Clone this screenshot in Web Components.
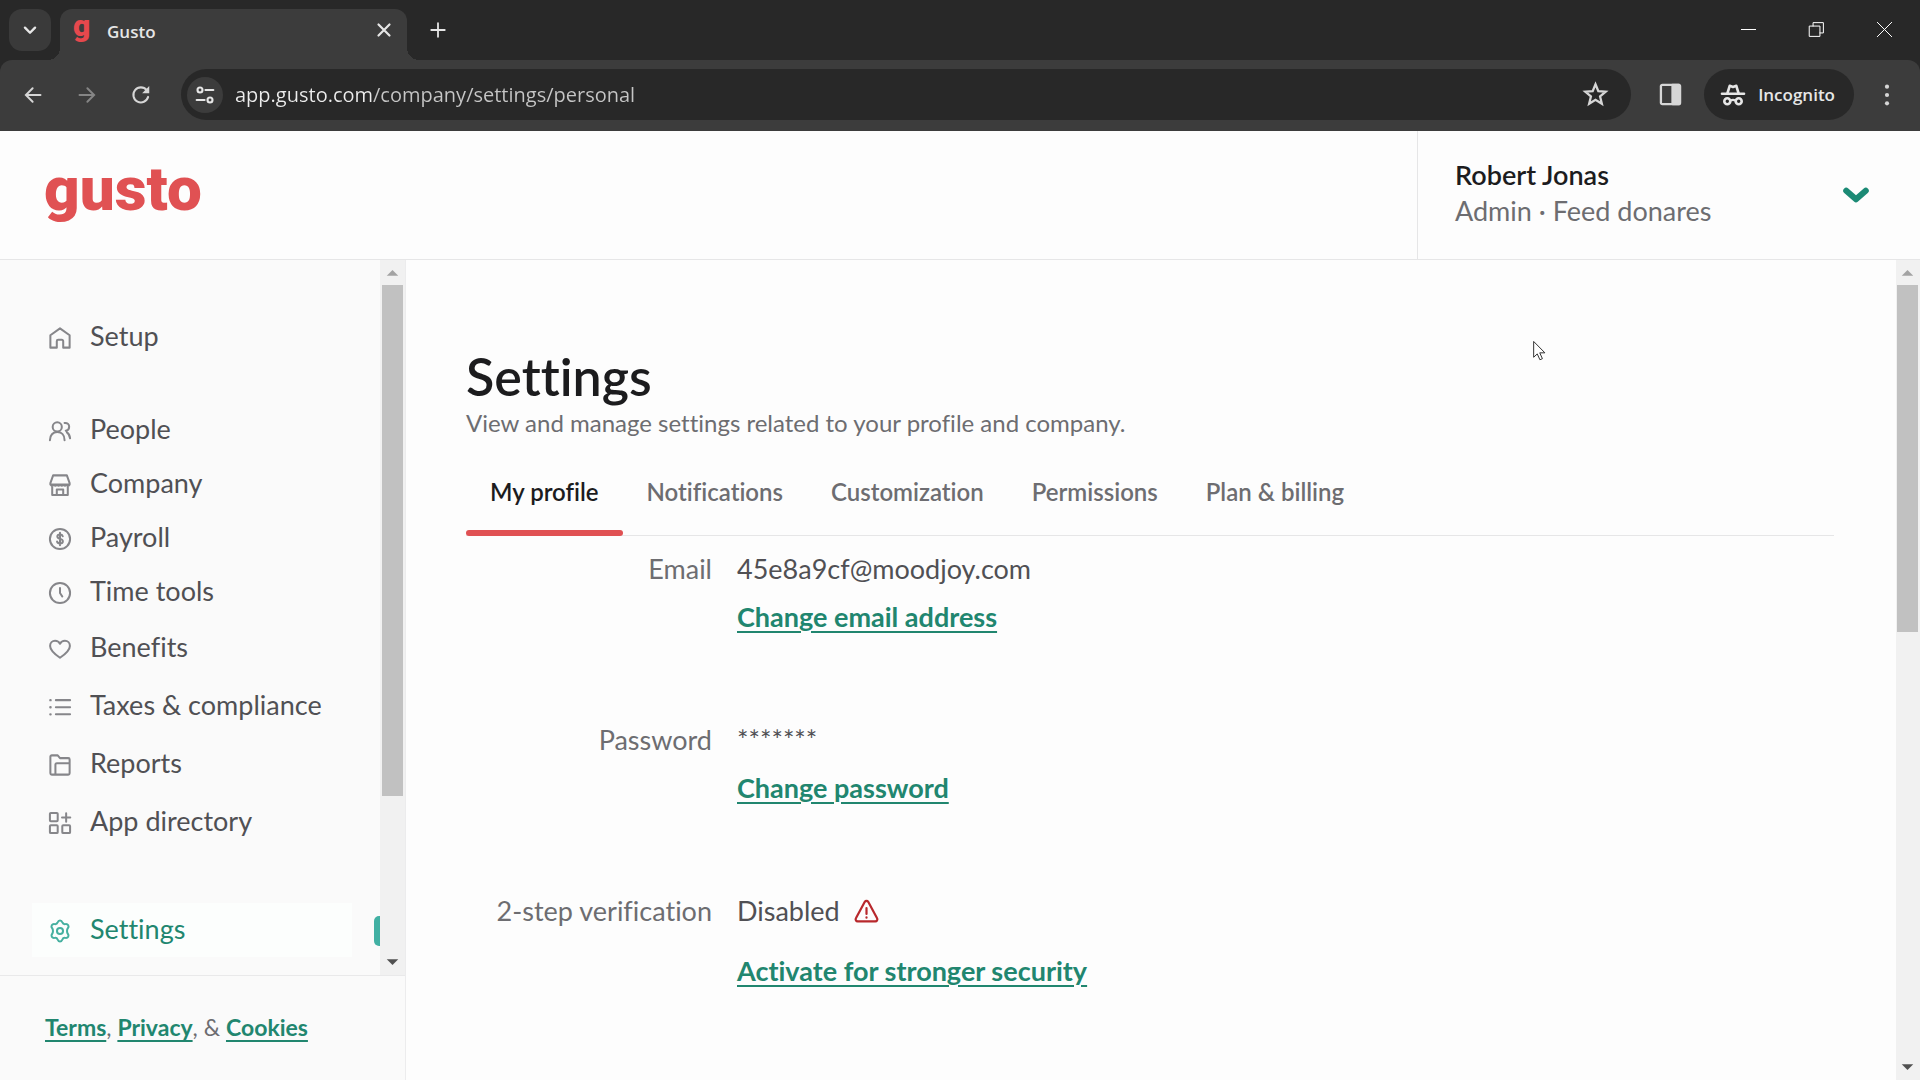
<!DOCTYPE html>
<html lang="en">
<head>
<meta charset="utf-8">
<title>Gusto</title>
<style>
  html, body { height: 100%; margin: 0; }
  body { font-family: Lato, "Liberation Sans", sans-serif; font-size: 27px; font-variant-ligatures: none; color: #505054; background: #fdfdfd; overflow: hidden; }
</style>
</head>
<body>
<app-window></app-window>
<script>
const ICONS = {
  chevron: '<path d="M6.500 9.500l5.500 5.500 5.500-5.500" stroke-width="2.600"/>',
  close: '<path d="M6 6l12 12M18 6L6 18" stroke-width="2.400"/>',
  plus: '<path d="M12 3v18M3 12h18" stroke-width="2.400"/>',
  back: '<path d="M22 12H3M11.500 3L2.500 12l9 9" stroke-width="2.600" stroke-linejoin="miter"/>',
  forward: '<path d="M2 12h19M12.500 3l9 9-9 9" stroke-width="2.600" stroke-linejoin="miter"/>',
  reload: '<path d="M21.500 14.500A10 10 0 1 1 19.600 5.500L21 7.500" stroke-width="2.700"/><path d="M23 0v9.500h-9.500z" fill="currentColor" stroke="none"/>',
  tune: '<circle cx="6" cy="6" r="3" stroke-width="2.500"/><path d="M12.500 6H22M2 18h9.500" stroke-width="2.500"/><circle cx="18" cy="18" r="3" stroke-width="2.500"/>',
  star: '<path d="M12 2.200l2.700 6.600 7.100.5-5.400 4.600 1.700 7L12 17.100l-6.100 3.800 1.700-7-5.400-4.600 7.100-.5z" stroke-width="2.200" stroke-linejoin="miter"/>',
  panel: '<rect x="2" y="2" width="20" height="20" rx="1.500" stroke-width="2.400"/><path d="M14 2h7v20h-7z" fill="currentColor"/>',
  incognito: '<path d="M1 10.800h22" stroke-width="2.600"/><path d="M6.500 10L8.700 2.800l3.300 1.200 3.300-1.200L17.500 10" stroke-width="2.600"/><circle cx="6.300" cy="18.200" r="3" stroke-width="2.600"/><circle cx="17.700" cy="18.200" r="3" stroke-width="2.600"/><path d="M9.500 17.600q2.500-1.500 5 0"/>',
  dots: '<g fill="currentColor" stroke="none"><circle cx="12" cy="2" r="2.500"/><circle cx="12" cy="12" r="2.500"/><circle cx="12" cy="22" r="2.500"/></g>',
  minimize: '<path d="M0 12h24" stroke-width="1.600" stroke-linecap="butt"/>',
  restore: '<path d="M1 6.500h16.500V23H1zM6.500 6.500V1H23v16.500h-5.500" stroke-width="1.600" stroke-linejoin="miter"/>',
  quit: '<path d="M.5.500l23 23M23.500.500l-23 23" stroke-width="1.600"/>',
  caret: '<path d="M3 8l9 8 9-8" stroke-width="5.600"/>',
  home: '<path d="M1.500 9L12 1.500 22.500 9V22.500h-7v-7A1.500 1.500 0 0 0 14 14h-4a1.500 1.500 0 0 0-1.500 1.500v7h-7z"/>',
  people: '<circle cx="9" cy="7.500" r="5"/><path d="M1 22c0-5.600 3.300-8.800 8-8.800s8 3.200 8 8.800M17 3.200c3.300-.4 5 1.700 5 4.200 0 2.200-1.600 4-3.700 4.300M19.500 13.500c2 1.400 3.300 3.600 3.500 6.500"/>',
  store: '<path d="M4.500 1.500h15L22.500 10v1.500h-21V10zM3.500 12v11h17V12M8.500 23v-6h7v6M1.500 11.500q1.700 2.400 3.500 0 1.700 2.400 3.500 0 1.700 2.400 3.500 0 1.700 2.400 3.500 0 1.700 2.400 3.500 0 1.700 2.400 3.500 0"/>',
  payroll: '<circle cx="12" cy="12" r="11"/><path d="M15 9c-.4-1.300-1.500-1.900-3-1.900-1.700 0-2.900.8-2.900 2.300 0 3.300 6 1.600 6 5 0 1.600-1.300 2.500-3.100 2.500-1.700 0-2.900-.7-3.200-2.100M12 5.300v13.400"/>',
  clock: '<circle cx="12" cy="12" r="11"/><path d="M12 6.500V12l2.500 3.800"/>',
  heart: '<path d="M12 21.500C5.500 17 1.200 13 1.200 8.600 1.200 5.200 3.700 3 6.600 3 8.900 3 11 4.300 12 6.300 13 4.300 15.100 3 17.400 3c2.900 0 5.400 2.200 5.400 5.600 0 4.400-4.300 8.400-10.800 12.900z"/>',
  list: '<path d="M7.500 4.500H23M7.500 12.300H23M7.500 20H23"/><path d="M1.500 4.500h.2M1.500 12.300h.2M1.500 20h.2" stroke-width="2.600"/>',
  folder: '<path d="M1.500 3a1.500 1.500 0 0 1 1.500-1.500h6.500l2.500 3h9A1.500 1.500 0 0 1 22.500 6v15a1.500 1.500 0 0 1-1.500 1.500H3A1.500 1.500 0 0 1 1.500 21zM7 22.500V11.500A1.500 1.500 0 0 1 8.500 10h14"/>',
  apps: '<rect x="1" y="1" width="8.500" height="9" rx="1"/><rect x="1" y="14.500" width="8.500" height="8.500" rx="1"/><rect x="14.500" y="14.500" width="8.500" height="8.500" rx="1"/><path d="M18.700 1.500v9M14.200 6h9"/>',
  gear: '<path d="M9.400 2.700c1-2.900 4.200-2.900 5.200 0 .5 1.300 1.700 2 3.100 1.800 3.100-.5 4.700 2.100 2.800 4.500-1.100 1.300-1.100 4.700 0 6 1.900 2.400.3 5-2.800 4.500-1.400-.2-2.600.5-3.100 1.800-1 2.900-4.200 2.900-5.200 0-.5-1.300-1.700-2-3.100-1.800-3.100.5-4.700-2.100-2.800-4.500 1.100-1.300 1.100-4.700 0-6-1.900-2.400-.3-5 2.800-4.500 1.400.2 2.600-.5 3.100-1.800z"/><circle cx="12" cy="12" r="3.300"/>',
  warning: '<path d="M10.300 2.800L1.400 19.300A2 2 0 0 0 3.200 22.300h17.600a2 2 0 0 0 1.800-3L13.700 2.800a2 2 0 0 0-3.400 0zM12 9v6M12 18.300v.4"/>',
  pointer: '<path d="M2 1v18.500l4.300-4 3.200 7 3-1.300-3.200-7H15z" fill="#fff" stroke="#333" stroke-width="1.200"/>'
};

function define(name, html, setup) {
  const template = document.createElement('template');
  template.innerHTML = html;
  customElements.define(name, class extends HTMLElement {
    constructor() {
      super();
      this.attachShadow({ mode: 'open' }).append(template.content.cloneNode(true));
    }
    connectedCallback() { if (setup) setup(this, this.shadowRoot); }
  });
}

define('ui-icon', `
  <style>
    :host { display: block; flex: none; width: 22px; height: 22px; }
    svg { display: block; width: 100%; height: 100%; overflow: visible; fill: none; stroke: currentColor; stroke-width: 2.200; stroke-linecap: round; stroke-linejoin: round; }
  </style>
  <svg viewBox="0 0 24 24" aria-hidden="true"></svg>`,
  (host, root) => { root.querySelector('svg').innerHTML = ICONS[host.getAttribute('name')] || ''; });

define('scroll-bar', `
  <style>
    :host { display: flex; flex-direction: column; flex: none; width: 24px; box-sizing: border-box; padding: 0 2px 0 1px; background: #f1f1f1; }
    svg { display: block; flex: none; height: 25px; width: 100%; }
    .thumb { flex: var(--thumb) 0 0; background: #c1c1c1; }
    .rest { flex: var(--rest) 0 0; }
  </style>
  <svg viewBox="0 0 22 25"><path d="M5 16l6-6 6 6z" fill="#a3a3a3"/></svg>
  <div class="thumb"></div><div class="rest"></div>
  <svg viewBox="0 0 22 25"><path d="M5 9h12l-6 6z" fill="#505050"/></svg>`);

define('browser-tab', `
  <style>
    :host { display: flex; align-items: center; position: relative; box-sizing: border-box; width: 347px; height: 51px; padding: 0 12px 9px 13px; border-radius: 12px 12px 0 0; background: #3c3c3c; color: #e6e6e6; }
    :host::before, :host::after { content: ""; position: absolute; bottom: 0; width: 12px; height: 12px; }
    :host::before { left: -12px; background: radial-gradient(circle at 0 0, transparent 12px, #3c3c3c 12px); }
    :host::after { right: -12px; background: radial-gradient(circle at 100% 0, transparent 12px, #3c3c3c 12px); }
    .mark { width: 34px; font: 900 30px/34px Roboto, sans-serif; color: #e5484d; padding-bottom: 8px; }
    .title { flex: 1; padding-top: 4px; font: 600 17px/24px "Open Sans", sans-serif; }
    button { border: 0; padding: 0; background: none; color: inherit; }
    ui-icon { width: 22px; height: 22px; }
  </style>
  <span class="mark">g</span>
  <span class="title"><slot></slot></span>
  <button aria-label="Close tab"><ui-icon name="close"></ui-icon></button>`);

define('tab-strip', `
  <style>
    :host { display: flex; align-items: flex-end; height: 60px; background: #282828; color: #e6e6e6; }
    button { display: grid; place-items: center; border: 0; padding: 0; background: none; color: inherit; }
    .search { width: 42px; height: 42px; margin: 0 9px 9px 9px; border-radius: 13px; background: #3a3a3a; }
    .add { width: 34px; height: 42px; margin: 0 0 9px 14px; }
    .add ui-icon { width: 18px; height: 18px; }
    .window { display: flex; margin: 0 2px 0 auto; height: 60px; }
    .window button { width: 68px; height: 58px; color: #fff; }
    .window ui-icon { width: 15px; height: 15px; }
  </style>
  <button class="search" aria-label="Search tabs"><ui-icon name="chevron"></ui-icon></button>
  <browser-tab>Gusto</browser-tab>
  <button class="add" aria-label="New tab"><ui-icon name="plus"></ui-icon></button>
  <div class="window">
    <button aria-label="Minimize"><ui-icon name="minimize"></ui-icon></button>
    <button aria-label="Restore"><ui-icon name="restore"></ui-icon></button>
    <button aria-label="Close"><ui-icon name="quit"></ui-icon></button>
  </div>`);

define('tool-bar', `
  <style>
    :host { display: block; height: 71px; background: #282828; }
    .bar { display: flex; align-items: center; height: 100%; box-sizing: border-box; padding: 0 15px 2px 6px; border-radius: 12px 12px 0 0; background: #3c3c3c; color: #d6d6d6; }
    button { display: grid; place-items: center; border: 0; padding: 0; background: none; color: inherit; font: inherit; }
    .nav { width: 54px; height: 51px; }
    .nav ui-icon { width: 18px; height: 18px; }
    .nav[disabled] { color: #858585; }
    .omnibox { display: flex; align-items: center; flex: 1; height: 51px; margin-left: 13px; border-radius: 26px; background: #282828; }
    .site { width: 36px; height: 36px; margin-left: 6px; border-radius: 50%; background: #3c3c3c; color: #e6e6e6; }
    .site ui-icon { width: 20px; height: 20px; }
    input { flex: 1; min-width: 0; margin: 0 0 0 12px; padding: 0; border: 0; outline: 0; font: 20px/30px "Open Sans", sans-serif; color: transparent; background: linear-gradient(90deg, #ececec 138px, #c6c6c6 0); background-clip: text; -webkit-background-clip: text; }
    .star { width: 48px; height: 48px; margin-right: 12px; }
    .star ui-icon { width: 25px; height: 25px; }
    .side { width: 48px; height: 48px; margin: 0 10px 0 15px; }
    .side ui-icon { width: 23px; height: 23px; }
    .incognito { display: flex; align-items: center; gap: 13px; height: 51px; padding: 0 19px 0 17px; border-radius: 26px; background: #282828; color: #e6e6e6; font: 600 17px/24px "Open Sans", sans-serif; }
    .incognito ui-icon { width: 24px; height: 24px; }
    .more { width: 36px; height: 48px; margin-left: 15px; }
    .more ui-icon { width: 20px; height: 20px; }
  </style>
  <div class="bar">
    <button class="nav" aria-label="Back"><ui-icon name="back"></ui-icon></button>
    <button class="nav" aria-label="Forward" disabled><ui-icon name="forward"></ui-icon></button>
    <button class="nav" aria-label="Reload"><ui-icon name="reload"></ui-icon></button>
    <div class="omnibox">
      <button class="site" aria-label="Site information"><ui-icon name="tune"></ui-icon></button>
      <input type="text" aria-label="Address" value="app.gusto.com/company/settings/personal">
      <button class="star" aria-label="Bookmark"><ui-icon name="star"></ui-icon></button>
    </div>
    <button class="side" aria-label="Side panel"><ui-icon name="panel"></ui-icon></button>
    <button class="incognito"><ui-icon name="incognito"></ui-icon>Incognito</button>
    <button class="more" aria-label="Menu"><ui-icon name="dots"></ui-icon></button>
  </div>`);

define('site-header', `
  <style>
    :host { display: flex; justify-content: space-between; height: 128px; border-bottom: 1px solid #e6e6e7; background: #fdfdfd; }
    .logo { align-self: center; margin-left: 44px; padding-bottom: 12px; font: 900 62px/72px Roboto, sans-serif; color: #e05153; text-decoration: none; }
    .account { display: flex; align-items: center; justify-content: space-between; width: 503px; box-sizing: border-box; padding: 0 51px 4px 37px; border: 0; border-left: 1px solid #e6e6e7; background: none; font: inherit; line-height: 36px; text-align: left; color: #6d6d71; }
    .name { display: block; font-weight: 600; color: #1c1c1e; }
    ui-icon { width: 26px; height: 26px; padding-top: 4px; color: #1b8a75; }
  </style>
  <a class="logo" href="#home">gusto</a>
  <button class="account">
    <span><span class="name"><slot name="name"></slot></span><slot name="role"></slot></span>
    <ui-icon name="caret"></ui-icon>
  </button>`);

define('nav-item', `
  <style>
    :host { display: block; height: 54px; }
    a { display: flex; align-items: center; gap: 19px; height: 100%; padding-left: 49px; color: inherit; text-decoration: none; line-height: 36px; }
    ui-icon { color: #86868a; margin-top: 2px; }
    span { padding-bottom: 2px; }
    :host([current]) { position: relative; color: #21866f; }
    :host([current]) a { margin: 0 28px 0 32px; padding-left: 17px; background: #fcfefd; }
    :host([current]) ui-icon { color: #45b0a0; }
    :host([current])::after { content: ""; position: absolute; right: 0; top: 13px; width: 6px; height: 30px; border-radius: 5px 0 0 5px; background: #41b0a3; }
  </style>
  <a><span><slot></slot></span></a>`,
  (host, root) => {
    const link = root.querySelector('a');
    const icon = document.createElement('ui-icon');
    link.href = '#' + host.getAttribute('icon');
    icon.setAttribute('name', host.getAttribute('icon'));
    link.prepend(icon);
  });

define('side-bar', `
  <style>
    :host { display: flex; flex-direction: column; flex: none; width: 405px; border-right: 1px solid #ececed; background: #fafafa; }
    .scroll { display: flex; flex: 1; min-height: 0; border-bottom: 1px solid #e9e9ea; }
    nav { flex: 1; padding-top: 50px; }
    .group { display: flex; flex-direction: column; margin-top: 39px; }
    .roomy nav-item { height: 58px; }
    .group + .roomy { margin-top: 0; }
    .group.last { margin-top: 52px; }
    scroll-bar { --thumb: 511; --rest: 154; width: 25px; padding: 0 2px; }
    footer { padding: 33px 0 35px 45px; font-size: 23px; line-height: 36px; color: #6d6d71; }
    footer a { font-weight: 700; color: #21866f; text-underline-offset: 4px; text-decoration-thickness: 2px; }
  </style>
  <div class="scroll">
    <nav>
      <nav-item icon="home">Setup</nav-item>
      <div class="group">
        <nav-item icon="people">People</nav-item>
        <nav-item icon="store">Company</nav-item>
        <nav-item icon="payroll">Payroll</nav-item>
        <nav-item icon="clock">Time tools</nav-item>
      </div>
      <div class="group roomy">
        <nav-item icon="heart">Benefits</nav-item>
        <nav-item icon="list">Taxes &amp; compliance</nav-item>
        <nav-item icon="folder">Reports</nav-item>
        <nav-item icon="apps">App directory</nav-item>
      </div>
      <div class="group last"><nav-item icon="gear" current>Settings</nav-item></div>
    </nav>
    <scroll-bar></scroll-bar>
  </div>
  <footer><a href="#terms">Terms</a>, <a href="#privacy">Privacy</a>, &amp; <a href="#cookies">Cookies</a></footer>`);

define('page-tabs', `
  <style>
    :host { display: flex; border-bottom: 1px solid #e6e6e7; }
    a { position: relative; padding: 24px 24px 25px; font-size: 24px; font-weight: 600; line-height: 36px; color: #6d6d71; text-decoration: none; }
    a.on { color: #1c1c1e; }
    a.on::after { content: ""; position: absolute; left: 0; right: 0; bottom: -1px; height: 6px; border-radius: 3px; background: #e05153; }
  </style>
  <a class="on" href="#profile" aria-current="page">My profile</a>
  <a href="#notifications">Notifications</a>
  <a href="#customization">Customization</a>
  <a href="#permissions">Permissions</a>
  <a href="#plan">Plan &amp; billing</a>`);

define('profile-row', `
  <style>
    :host { display: grid; grid-template-columns: 246px 1fr; column-gap: 25px; line-height: 48px; }
    .label { text-align: right; color: #6d6d71; }
    .body { display: flex; flex-direction: column; align-items: flex-start; gap: var(--gap, 0); }
    .value { display: flex; align-items: center; gap: 14px; }
    ::slotted(a) { font-weight: 700; color: #21866f; text-decoration-thickness: 2px; text-underline-offset: 4px; }
    ::slotted(ui-icon) { width: 25px; height: 24px; color: #b8282c; }
  </style>
  <div class="label"><slot name="label"></slot></div>
  <div class="body"><div class="value"><slot></slot></div><slot name="action"></slot></div>`);

define('settings-page', `
  <style>
    :host { display: block; flex: 1; min-width: 0; padding: 84px 62px 0 60px; }
    h1 { margin: 0; font-size: 52px; font-weight: 600; line-height: 64px; color: #1c1c1e; }
    p { margin: 0 0 12px; font-size: 24px; line-height: 30px; color: #6d6d71; }
    section { display: flex; flex-direction: column; gap: 75px; padding-top: 9px; }
    .wide { --gap: 12px; }
  </style>
  <h1>Settings</h1>
  <p>View and manage settings related to your profile and company.</p>
  <page-tabs></page-tabs>
  <section>
    <profile-row><span slot="label">Email</span>45e8a9cf@moodjoy.com<a slot="action" href="#email">Change email address</a></profile-row>
    <profile-row><span slot="label">Password</span>*******<a slot="action" href="#password">Change password</a></profile-row>
    <profile-row class="wide"><span slot="label">2-step verification</span>Disabled<ui-icon name="warning"></ui-icon><a slot="action" href="#security">Activate for stronger security</a></profile-row>
  </section>`);

define('app-window', `
  <style>
    :host { display: flex; flex-direction: column; height: 100vh; }
    tab-strip, tool-bar, site-header { flex: none; }
    main { display: flex; flex: 1; min-height: 0; overflow: hidden; }
    scroll-bar { --thumb: 347; --rest: 423; }
    .pointer { position: absolute; left: 1532px; top: 341px; width: 20px; height: 20px; pointer-events: none; }
  </style>
  <tab-strip></tab-strip>
  <tool-bar></tool-bar>
  <site-header><span slot="name">Robert Jonas</span><span slot="role">Admin · Feed donares</span></site-header>
  <main>
    <side-bar></side-bar>
    <settings-page></settings-page>
    <scroll-bar></scroll-bar>
  </main>
  <ui-icon class="pointer" name="pointer"></ui-icon>`);
</script>
</body>
</html>
